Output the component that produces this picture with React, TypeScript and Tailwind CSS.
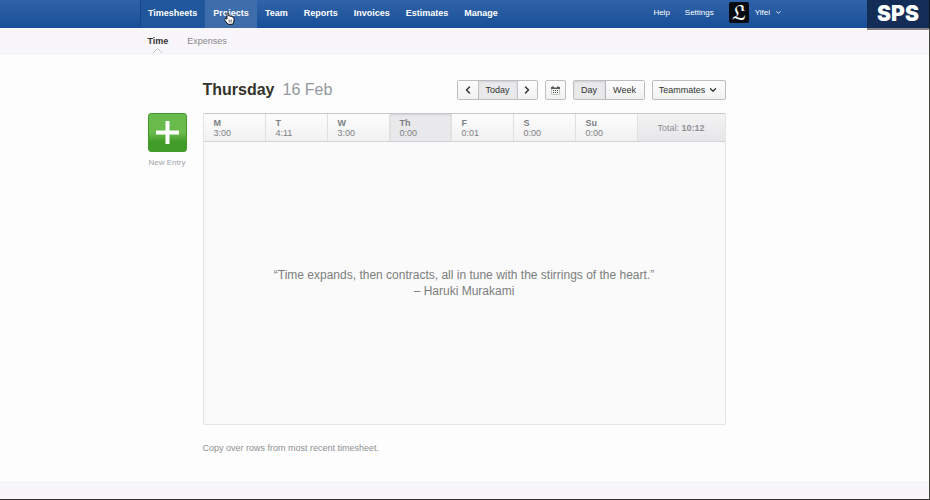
import { ChevronDown, ChevronLeft, ChevronRight } from "lucide-react";

const navItems = ["Team", "Reports", "Invoices", "Estimates", "Manage"];

const days = [
  { name: "M", hours: "3:00" },
  { name: "T", hours: "4:11" },
  { name: "W", hours: "3:00" },
  { name: "Th", hours: "0:00", active: true },
  { name: "F", hours: "0:01" },
  { name: "S", hours: "0:00" },
  { name: "Su", hours: "0:00" },
];

const raised = "bg-linear-to-b from-[#fdfdfd] to-[#f1f1f2]";
const pressed = "bg-[#e9e8eb] shadow-[inset_0_1px_2px_#d0d0d3]";
const group = "flex h-5 overflow-hidden rounded-[2px] border border-[#bdbec0]";

function HandCursor() {
  return (
    <svg className="pointer-events-none absolute top-3 left-[19px] h-[13px] w-[11px]" viewBox="0 0 11 13" aria-hidden="true">
      <path
        d="M3 7V1.5Q3.7 0 4.8 1.5V4Q6 3.4 6.5 4.4Q7.7 3.9 8.2 5Q10 4.8 10 6.5V9L8.8 12.3H4L1 8.5Q.4 7 1.5 6.6Z"
        fill="#fff"
        stroke="#111"
        strokeWidth="1"
      />
      <path d="M5.2 7.5v3M7.2 7.5v3" stroke="#333" strokeWidth=".8" />
    </svg>
  );
}

function CalendarIcon() {
  return (
    <svg className="h-[9px] w-[9px]" viewBox="0 0 9 9" aria-hidden="true">
      <path d="M1 .5h2v1h3v-1h2V1h1v2H0V1h1z" fill="#555d54" />
      <path d="M.5 3v5.5h8V3" fill="#f4f4f4" stroke="#c5c7c5" />
      <path d="M2 4h1v1H2zM4 4h1v1H4zM6 4h1v1H6zM2 6h1v1H2zM4 6h1v1H4zM6 6h1v1H6z" fill="#454d44" />
    </svg>
  );
}

function PlusIcon() {
  return (
    <svg className="h-[25px] w-[25px]" viewBox="0 0 25 25" aria-hidden="true">
      <path d="M10.5 1h4v9.5H24v4h-9.5V24h-4v-9.5H1v-4h9.5z" fill="#fff" />
    </svg>
  );
}

function Header() {
  return (
    <header className="relative h-7 bg-linear-to-b from-[#3063a8] to-[#164f98] text-white">
      <div className="mx-auto flex h-full max-w-[650px] items-stretch text-[9px] leading-3">
        <nav className="flex flex-1 font-bold" aria-label="Main">
          <a href="#timesheets" className="flex items-center border-l border-[#174783] bg-[#20569b] pr-2 pb-[3px] pl-[7px]">
            Timesheets
          </a>
          <a href="#projects" className="relative flex items-center bg-[#3e6dab] px-2 pb-[3px]">
            Projects
            <HandCursor />
          </a>
          {navItems.map((item) => (
            <a key={item} href={`#${item.toLowerCase()}`} className="flex items-center px-2 pb-[3px]">
              {item}
            </a>
          ))}
        </nav>
        <div className="flex items-center gap-[15px] pr-2 pb-[3px] text-[8px]">
          <a href="#help">Help</a>
          <a href="#settings">Settings</a>
          <button type="button" className="flex items-center gap-[6px]">
            <span className="flex h-[21px] w-5 items-center justify-center overflow-hidden rounded-[2px] bg-[#080c12] pt-1 font-[DejaVu_Math_TeX_Gyre,serif] text-[18px] leading-5">
              𝔏
            </span>
            <span>Yifei</span>
            <ChevronDown size={7} strokeWidth={3} className="-ml-px" />
          </button>
        </div>
      </div>
      <div className="absolute top-0 right-0 flex h-[30px] w-[63px] items-center justify-center border-r border-b-2 border-r-[#111] border-b-[#858484] bg-[#132d57] font-[Inter,sans-serif] text-[21px] leading-7 font-black">
        SPS
      </div>
    </header>
  );
}

function SubNav() {
  return (
    <nav className="h-[26px] border-b border-[#f0eff1] bg-[#f8f6fa]" aria-label="Timesheets">
      <div className="mx-auto flex h-full max-w-[634px] gap-[19px] text-[9px] leading-[26px]">
        <a href="#time" className="relative font-bold text-[#35332e]">
          Time
          <svg className="absolute bottom-0 left-[5px] h-[5px] w-[9px]" viewBox="0 0 9 5" aria-hidden="true">
            <path d="M0 5 4.5.5 9 5" fill="#fdfdfd" stroke="#c8c6ca" />
          </svg>
        </a>
        <a href="#expenses" className="text-[#85878b]">
          Expenses
        </a>
      </div>
    </nav>
  );
}

function Toolbar() {
  return (
    <div className="flex gap-[7px] text-[9px] leading-[18px] text-[#30352f]">
      <div className={group}>
        <button type="button" aria-label="Previous day" className={`flex w-5 items-center justify-center ${raised}`}>
          <ChevronLeft size={12} strokeWidth={3} />
        </button>
        <button type="button" className={`w-10 border-x border-[#c4c4c6] ${pressed}`}>
          Today
        </button>
        <button type="button" aria-label="Next day" className={`flex w-[19px] items-center justify-center ${raised}`}>
          <ChevronRight size={12} strokeWidth={3} />
        </button>
      </div>
      <button type="button" aria-label="Pick a date" className={`${group} w-[21px] items-center justify-center ${raised}`}>
        <CalendarIcon />
      </button>
      <div className={group}>
        <button type="button" className={`w-8 border-r border-[#b5b6b8] ${pressed}`}>
          Day
        </button>
        <button type="button" className={`w-[38px] ${raised}`}>
          Week
        </button>
      </div>
      <button type="button" className={`${group} w-[74px] items-center justify-center gap-[3px] ${raised}`}>
        Teammates
        <ChevronDown size={10} strokeWidth={3} />
      </button>
    </div>
  );
}

function WeekPanel() {
  return (
    <section className="flex flex-1 flex-col overflow-hidden rounded-[2px] border border-[#e4e4e5] border-t-[#c5c6c7] bg-[#fafafa]">
      <div className="grid h-7 grid-cols-[repeat(7,62fr)_87fr] border-b border-[#d3d3d5] text-[9px] leading-[10px] text-[#7c7f84]">
        {days.map((day) => (
          <button
            key={day.name}
            type="button"
            className={`border-r border-[#e0dfe2] pl-[10px] text-left ${day.active ? pressed : raised}`}
          >
            <span className="block font-bold">{day.name}</span>
            <span className="block">{day.hours}</span>
          </button>
        ))}
        <div className="flex items-center justify-center bg-linear-to-b from-[#f4f4f5] to-[#e6e5e8] text-[#8d9095]">
          Total:&nbsp;<span className="font-bold">10:12</span>
        </div>
      </div>
      <blockquote className="flex flex-1 flex-col items-center justify-center text-center text-[12px] leading-4 text-[#7b7e7d]">
        <p>“Time expands, then contracts, all in tune with the stirrings of the heart.”</p>
        <footer>– Haruki Murakami</footer>
      </blockquote>
    </section>
  );
}

export default function App() {
  return (
    <div className="flex min-h-screen flex-col border-b border-[#33312f] bg-[#fdfdfd] font-['Liberation_Sans',Arial,sans-serif]">
      <Header />
      <div className="flex flex-1 flex-col border-r border-[#44443f]">
        <SubNav />
        <main className="mx-auto flex w-full max-w-[634px] flex-1 gap-4 pt-[26px] pb-7">
          <div className="w-[39px] shrink-0 pt-[33px]">
            <button type="button" className="flex w-full flex-col items-center gap-[5px] text-[8px] leading-3 text-[#a0a3a9]">
              <span className="flex h-[39px] w-full items-center justify-center rounded-[3px] border border-[#43992b] bg-linear-to-b from-[#69bb4c] from-50% to-[#419d27] to-75% text-white">
                <PlusIcon />
              </span>
              <span className="whitespace-nowrap">New Entry</span>
            </button>
          </div>
          <div className="mr-14 flex flex-1 flex-col">
            <div className="mb-[13px] flex items-center justify-between">
              <h1 className="flex gap-2 text-[16px] leading-5 font-bold text-[#35332b]">
                Thursday <span className="font-normal text-[#9499a0]">16 Feb</span>
              </h1>
              <Toolbar />
            </div>
            <WeekPanel />
            <button type="button" className="mt-[17px] self-start text-[9px] leading-3 text-[#8d9194]">
              Copy over rows from most recent timesheet.
            </button>
          </div>
        </main>
        <footer className="h-[17px] border-t border-[#f0eff1] bg-[#f8f6fa]" />
      </div>
    </div>
  );
}
